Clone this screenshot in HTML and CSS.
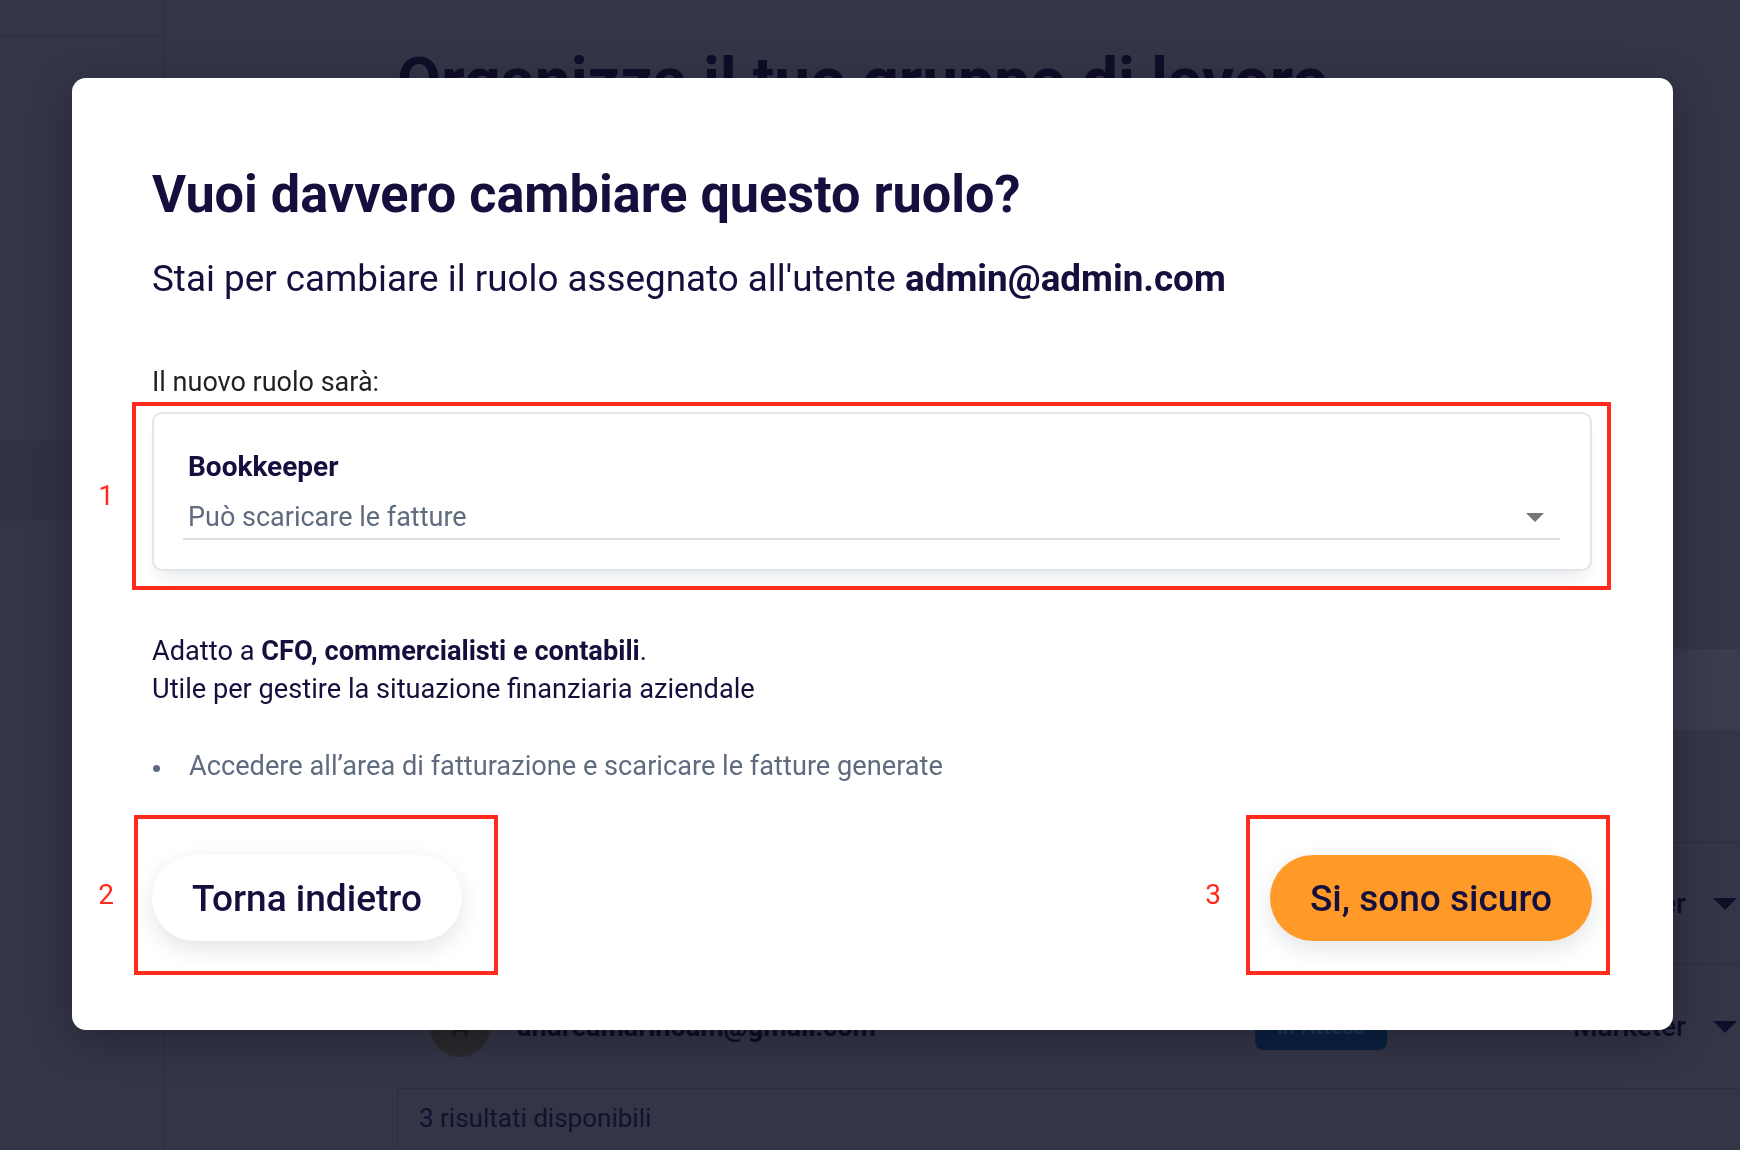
FILE: index.html
```html
<!DOCTYPE html>
<html lang="it">

<head>
    <meta charset="UTF-8">
    <meta name="viewport" content="width=device-width, initial-scale=1.0">
    <title>Organizza il tuo gruppo di lavoro</title>
    <link rel="stylesheet" href="styles.css">
</head>

<body>
    <!-- Page behind the dialog (dimmed) -->
    <div class="page">
        <aside class="sidebar">
            <div class="sidebar-top"></div>
            <div class="sidebar-item"></div>
        </aside>
        <main class="content">
            <h1 class="page-title">Organizza il tuo gruppo di lavoro</h1>
            <div class="team-table">
                <div class="table-head"></div>
                <div class="table-row row-first"></div>
                <div class="table-row">
                    <span class="avatar">A</span>
                    <span class="row-user">admin@admin.com</span>
                    <span></span>
                    <span class="row-role">Owner <span class="caret"></span></span>
                </div>
                <div class="table-row row-last">
                    <span class="avatar">A</span>
                    <span class="row-user">andreamarinoam@gmail.com</span>
                    <span class="badge">In Attesa</span>
                    <span class="row-role">Marketer <span class="caret"></span></span>
                </div>
                <div class="table-foot">3 risultati disponibili</div>
            </div>
        </main>
    </div>

    <!-- Change role dialog -->
    <div class="modal">
        <h2 class="modal-title">Vuoi davvero cambiare questo ruolo?</h2>
        <p class="modal-lead">Stai per cambiare il ruolo assegnato all'utente <strong>admin@admin.com</strong></p>

        <div class="field-label">Il nuovo ruolo sarà:</div>
        <div class="role-card">
            <div class="role-name">Bookkeeper</div>
            <div class="role-select">
                <span>Può scaricare le fatture</span>
                <span class="select-arrow"></span>
            </div>
            <span class="mark mark-card"><span class="mark-num">1</span></span>
        </div>

        <p class="role-desc">Adatto a <strong>CFO, commercialisti e contabili</strong>.<br>Utile per gestire la situazione finanziaria aziendale</p>
        <ul class="role-perms">
            <li>Accedere all’area di fatturazione e scaricare le fatture generate</li>
        </ul>

        <div class="modal-actions">
            <div class="action">
                <button class="btn btn-back" type="button">Torna indietro</button>
                <span class="mark mark-back"><span class="mark-num">2</span></span>
            </div>
            <div class="action">
                <button class="btn btn-confirm" type="button">Si, sono sicuro</button>
                <span class="mark mark-confirm"><span class="mark-num">3</span></span>
            </div>
        </div>
    </div>
</body>

</html>
```

FILE: styles.css
```css
* {
    box-sizing: border-box;
}

html,
body {
    margin: 0;
    height: 100%;
    overflow: hidden;
}

body {
    font-family: Roboto, 'Noto Sans', sans-serif;
    background-color: #343648;
    color: #140f3c;
}

/* ---------- dimmed page ---------- */
.page {
    display: flex;
    height: 100%;
}

.sidebar {
    width: 165px;
    flex-shrink: 0;
    border-right: 1px solid #2d2f40;
}

.sidebar-top {
    height: 36px;
    border-bottom: 1px solid #2d2f40;
}

.sidebar-item {
    height: 80px;
    margin-top: 405px;
    background-color: #303244;
}

.content {
    flex: 1;
    padding: 44px 0 0 232px;
}

.page-title {
    margin: 0;
    font-size: 64px;
    line-height: 76px;
    font-weight: 700;
    color: #0f0d28;
}

.team-table {
    margin-top: 529px;
}

.table-head {
    height: 81px;
    background-color: #3a3c4f;
}

.table-row {
    display: grid;
    grid-template-columns: 87px 738px 132px 1fr;
    align-items: center;
    height: 122px;
    padding: 0 3px 0 33px;
    border-bottom: 1px solid #2b2d3e;
}

.row-first {
    height: 113px;
}

.row-last {
    height: 124px;
}

.avatar {
    width: 60px;
    height: 60px;
    border-radius: 50%;
    background-color: #2b2b2f;
    color: #1a1a1e;
    display: flex;
    align-items: center;
    justify-content: center;
    font-size: 26px;
    font-weight: 500;
}

.row-user {
    font-size: 27px;
    font-weight: 700;
    color: #0f0d28;
}

.badge {
    height: 47px;
    border-radius: 8px;
    background-color: #0b2142;
    color: #1d3558;
    font-size: 22px;
    font-weight: 700;
    display: flex;
    align-items: center;
    justify-content: center;
}

.row-role {
    display: flex;
    align-items: center;
    justify-content: flex-end;
    font-size: 28px;
    font-weight: 500;
    color: #0f0d28;
}

.caret {
    width: 0;
    height: 0;
    margin-left: 27px;
    border-left: 12px solid transparent;
    border-right: 12px solid transparent;
    border-top: 12px solid #0f0d28;
}

.table-foot {
    padding: 11px 0 0 21px;
    font-size: 26px;
    line-height: 36px;
    color: #13112d;
    border-left: 1px solid #2d2f40;
    height: 80px;
}

/* ---------- dialog ---------- */
.modal {
    position: fixed;
    top: 78px;
    left: 72px;
    width: 1601px;
    padding: 86px 81px 89px 80px;
    background-color: #fff;
    border-radius: 14px;
    box-shadow: 0 10px 40px rgba(0, 0, 0, 0.3);
}

.modal-title {
    margin: 0;
    font-size: 52.2px;
    line-height: 62px;
    font-weight: 700;
}

.modal-lead {
    margin: 31px 0 0;
    font-size: 36.8px;
    line-height: 44px;
}

.modal-lead strong {
    font-weight: 700;
}

.field-label {
    margin-top: 65px;
    font-size: 27px;
    line-height: 32px;
    color: #1f2024;
}

.role-card {
    position: relative;
    margin-top: 14px;
    padding: 36px 30px 29px 29px;
    border: 2px solid #e1e6ea;
    border-radius: 10px;
    box-shadow: 0 12px 18px -8px rgba(30, 40, 60, 0.12);
}

.role-name {
    padding-left: 5px;
    font-size: 28px;
    line-height: 34px;
    font-weight: 700;
}

.role-select {
    display: flex;
    align-items: center;
    justify-content: space-between;
    margin-top: 17px;
    padding: 0 16px 5px 5px;
    border-bottom: 2px solid #dedfe1;
    font-size: 27px;
    line-height: 32px;
    color: #5f6b7e;
}

.select-arrow {
    width: 0;
    height: 0;
    border-left: 9px solid transparent;
    border-right: 9px solid transparent;
    border-top: 9px solid #777;
}

.role-desc {
    margin: 61px 0 0;
    font-size: 27.2px;
    line-height: 38px;
}

.role-desc strong {
    font-weight: 700;
}

.role-perms {
    list-style: none;
    margin: 39px 0 0;
    padding: 0 0 0 37px;
    font-size: 27.2px;
    line-height: 38px;
    color: #5f6b7e;
}

.role-perms li {
    position: relative;
}

.role-perms li::before {
    content: '';
    position: absolute;
    left: -36px;
    top: 18px;
    width: 7px;
    height: 7px;
    border-radius: 50%;
    background-color: #5f6b7e;
}

.modal-actions {
    display: flex;
    justify-content: space-between;
    margin-top: 70px;
}

.action {
    position: relative;
}

.btn {
    display: block;
    height: 86px;
    padding: 0 40px;
    border: none;
    border-radius: 43px;
    font-family: Roboto, 'Noto Sans', sans-serif;
    font-size: 37px;
    font-weight: 500;
    color: #140f3c;
    cursor: pointer;
    box-shadow: 0 8px 22px rgba(30, 40, 70, 0.12);
}

.btn-back {
    background-color: #fff;
}

.btn-confirm {
    background-color: #ff9a28;
}

/* ---------- review annotations ---------- */
.mark {
    position: absolute;
    border: 4px solid #ff2b1c;
    pointer-events: none;
}

.mark-card {
    top: -12px;
    left: -22px;
    right: -21px;
    bottom: -21px;
}

.mark-back {
    top: -40px;
    left: -18px;
    right: -36px;
    bottom: -34px;
}

.mark-confirm {
    top: -40px;
    left: -24px;
    right: -18px;
    bottom: -34px;
}

.mark-num {
    position: absolute;
    top: 50%;
    right: calc(100% + 22px);
    transform: translateY(-50%);
    font-size: 28px;
    line-height: 1;
    color: #ff2b1c;
}

.mark-back .mark-num {
    right: calc(100% + 24px);
}

.mark-confirm .mark-num {
    right: calc(100% + 29px);
}
```
